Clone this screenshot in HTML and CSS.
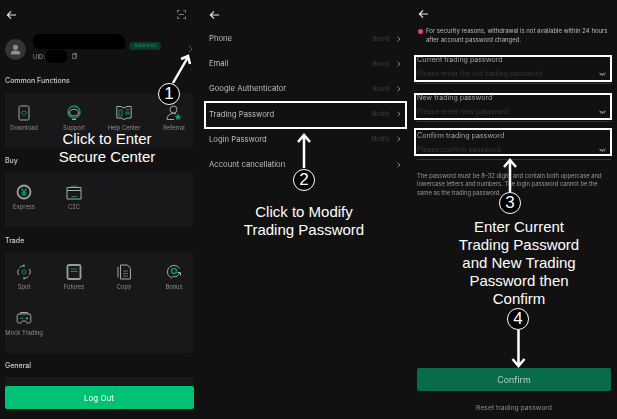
FILE: index.html
```html
<!DOCTYPE html>
<html lang="en">
<head>
    <meta charset="UTF-8">
    <meta name="viewport" content="width=device-width, initial-scale=1.0">
    <title>Change Trading Password</title>
    <link rel="stylesheet" href="styles.css">
</head>
<body>
    <div class="guide">
        <div class="screens">
            <!-- account screen -->
            <section class="screen account">
                <div class="topbar">
                    <svg class="back" viewBox="0 0 12 10"><path d="M11 5H1.5M5.5 1 1.5 5l4 4"/></svg>
                    <svg class="scan" viewBox="0 0 10 10"><path d="M0.5 3V0.5H3M7 0.5H9.5V3M0.5 7V9.5H3M7 9.5H9.5V7M2 5H8"/></svg>
                </div>
                <div class="profile">
                    <div class="avatar">
                        <svg viewBox="0 0 12 12"><circle cx="6" cy="3.6" r="2.8"/><path d="M1 11.5V9.6C1 8 3 7.2 6 7.2s5 .8 5 2.4v1.900z"/></svg>
                    </div>
                    <div class="who">
                        <div class="name-row">
                            <span class="redacted"></span>
                            <span class="badge">Advanced</span>
                        </div>
                        <div class="uid-row">
                            <span>UID:</span>
                            <span class="redacted-small"></span>
                            <svg class="copy-icon" viewBox="0 0 6 7"><path d="M1.5 1V.5h4v5H5M.5 1.5h4v5h-4z"/></svg>
                        </div>
                    </div>
                    <svg class="chev-thin" viewBox="0 0 6 10"><path d="M1 1l4 4-4 4"/></svg>
                </div>

                <h2 class="sec-title first">Common Functions</h2>
                <div class="card">
                    <div class="item">
                        <svg viewBox="0 0 16 16"><rect x="3" y="1" width="10" height="14" rx="1.5"/><path class="g" d="M8 10.5 5.8 8.2a1.4 1.4 0 0 1 2.2-1.7 1.4 1.4 0 0 1 2.200 1.7z"/></svg>
                        <span>Download</span>
                    </div>
                    <div class="item">
                        <svg viewBox="0 0 16 16"><circle class="g thick" cx="8" cy="7" r="6"/><path d="M3.5 8C3.500 3 12.500 3 12.500 8c0 4-9 4-9 0zM6 14.500h4"/></svg>
                        <span>Support</span>
                    </div>
                    <div class="item">
                        <svg viewBox="0 0 16 16"><path d="M8 3 5 1.5H.8V13H5l3 1.500L11 13h4.200V1.500H11z"/><path class="g" d="M3 5h3v6H3zM10 4.500h3M10 7h3v2h-3z"/></svg>
                        <span>Help Center</span>
                    </div>
                    <div class="item">
                        <svg viewBox="0 0 16 16"><circle cx="7.500" cy="4.500" r="3.500"/><path d="M1 14.500c0-4 3-6 6.500-6 1 0 2 .2 2.500.5M1 14.500h7"/><path class="gf" d="m12 8.500 1.100 2.200 2.400.3-1.800 1.600.5 2.400-2.200-1.200-2.200 1.200.5-2.400L8.500 11l2.400-.3z"/></svg>
                        <span>Referral</span>
                    </div>
                </div>

                <h2 class="sec-title">Buy</h2>
                <div class="card">
                    <div class="item">
                        <svg viewBox="0 0 16 16"><circle class="ring" cx="8" cy="8" r="6.500"/><path class="g yen" d="m5.500 4.500 2.500 3.500 2.500-3.500M8 8v4M5.500 8.500h5M5.500 10.500h5"/></svg>
                        <span>Express</span>
                    </div>
                    <div class="item">
                        <svg viewBox="0 0 16 16"><path d="M1 3.500h14V15H1z"/><path d="M1 6.500h14"/><path class="g" d="M4.500 3 6 1.500 8 3l2-1.500L11.500 3M5.500 12.500h5"/></svg>
                        <span>C2C</span>
                    </div>
                </div>

                <h2 class="sec-title">Trade</h2>
                <div class="card">
                    <div class="item">
                        <svg viewBox="0 0 16 16"><path d="M3.500 3.500A6.300 6.300 0 0 1 8 1.700M12.500 12.500A6.300 6.300 0 0 1 8 14.300M13.500 5a6.300 6.300 0 0 1 0 6M2.500 11a6.300 6.300 0 0 1 0-6M8 .5v2.500M8 13v2.500"/><circle class="g" cx="8" cy="8" r="2"/></svg>
                        <span>Spot</span>
                    </div>
                    <div class="item">
                        <svg viewBox="0 0 16 16"><rect class="ring" x="1.500" y="1" width="13" height="14" rx="1.500"/><path class="g" d="M4.500 5h7M4.500 7.500h7"/></svg>
                        <span>Futures</span>
                    </div>
                    <div class="item">
                        <svg viewBox="0 0 16 16"><path d="M4.500 15h10V4.500L11.500 1H4.500zM2 3v10.500"/><path class="g" d="M7 7h5M7 9.500h5M7 12h5"/></svg>
                        <span>Copy</span>
                    </div>
                    <div class="item">
                        <svg viewBox="0 0 16 16"><path d="M13.500 4.500A6.500 6.500 0 0 0 1.500 8c0 1.500.5 3 1.500 4l2.500 2 2.500-2 2 1"/><circle class="g thick" cx="8" cy="7" r="2.500"/><path d="m10 13 4-4M11.500 8.500H14.500V11.500"/></svg>
                        <span>Bonus</span>
                    </div>
                    <div class="item">
                        <svg viewBox="0 0 16 16"><path d="M3 4h10a1.800 1.800 0 0 1 1.800 1.800v5.700c0 1-.8 1.500-1.500 1.500h-2L9.500 11h-3L4.700 13h-2C2 13 1.200 12.500 1.200 11.500V5.800A1.800 1.800 0 0 1 3 4zM3.500 4 4.500 2.500h7L12.500 4"/><path class="g" d="M4 8.300h3.500"/><circle class="gf" cx="11" cy="8.300" r="1.300"/></svg>
                        <span>Mock Trading</span>
                    </div>
                </div>

                <h2 class="sec-title">General</h2>
                <div class="card-peek"></div>
                <button class="logout">Log Out</button>
            </section>

            <!-- secure center -->
            <section class="screen secure">
                <div class="topbar">
                    <svg class="back" viewBox="0 0 12 10"><path d="M11 5H1.500M5.500 1 1.500 5l4 4"/></svg>
                </div>
                <ul class="menu">
                    <li><span>Phone</span><em>Bound</em><svg viewBox="0 0 6 10"><path d="M1 1l4 4-4 4"/></svg></li>
                    <li><span>Email</span><em>Bound</em><svg viewBox="0 0 6 10"><path d="M1 1l4 4-4 4"/></svg></li>
                    <li><span>Google Authenticator</span><em>Bound</em><svg viewBox="0 0 6 10"><path d="M1 1l4 4-4 4"/></svg></li>
                    <li><span>Trading Password</span><em>Modify</em><svg viewBox="0 0 6 10"><path d="M1 1l4 4-4 4"/></svg></li>
                    <li><span>Login Password</span><em>Modify</em><svg viewBox="0 0 6 10"><path d="M1 1l4 4-4 4"/></svg></li>
                    <li><span>Account cancellation</span><em></em><svg viewBox="0 0 6 10"><path d="M1 1l4 4-4 4"/></svg></li>
                </ul>
            </section>

            <!-- change password form -->
            <section class="screen form">
                <div class="topbar">
                    <svg class="back" viewBox="0 0 12 10"><path d="M11 5H1.500M5.500 1 1.500 5l4 4"/></svg>
                </div>
                <div class="notice">
                    <i class="dot"></i>
                    <p>For security reasons, withdrawal is not available within 24 hours after account password changed.</p>
                </div>
                <div class="fields">
                    <div class="field">
                        <label>Current trading password</label>
                        <div class="input-row"><span>Please enter the old trading password</span><svg viewBox="0 0 8 4"><path d="M.5.8c2 2 5 2 7 0M2 2.500 1.500 3.500M4 3v1M6 2.500l.5 1"/></svg></div>
                    </div>
                    <div class="field">
                        <label>New trading password</label>
                        <div class="input-row"><span>Please enter new password</span><svg viewBox="0 0 8 4"><path d="M.5.8c2 2 5 2 7 0M2 2.500 1.500 3.500M4 3v1M6 2.500l.5 1"/></svg></div>
                    </div>
                    <div class="field">
                        <label>Confirm trading password</label>
                        <div class="input-row"><span>Please confirm password</span><svg viewBox="0 0 8 4"><path d="M.5.8c2 2 5 2 7 0M2 2.500 1.500 3.500M4 3v1M6 2.500l.5 1"/></svg></div>
                    </div>
                </div>
                <p class="rules">The password must be 8–32 digits and contain both uppercase and lowercase letters and numbers. The login password cannot be the same as the trading password.</p>
                <button class="confirm">Confirm</button>
                <a class="reset">Reset trading password</a>
            </section>
        </div>

        <!-- annotations on top of the screenshots -->
        <svg class="marks" viewBox="0 0 617 419">
            <rect class="box" x="205" y="102" width="201" height="26"/>
            <rect class="box" x="415" y="56" width="196" height="25"/>
            <rect class="box" x="415" y="94" width="196" height="25"/>
            <rect class="box" x="415" y="129" width="196" height="26"/>
            <path class="arrow" d="M173 83 188 57M181 59 188 56 190 64"/>
            <path class="arrow" d="M304 168V135M298 142 304 135 310 142"/>
            <path class="arrow" d="M510 192V160M504 167 510 160 516 167"/>
            <path class="arrow" d="M518.500 330V366M512.500 359 518.500 366 524.500 359"/>
        </svg>
        <span class="step step-1">1</span>
        <span class="step step-2">2</span>
        <span class="step step-3">3</span>
        <span class="step step-4">4</span>
        <div class="note note-1">Click to Enter<br>Secure Center</div>
        <div class="note note-2">Click to Modify<br>Trading Password</div>
        <div class="note note-3">Enter Current<br>Trading Password<br>and New Trading<br>Password then<br>Confirm</div>
    </div>
</body>
</html>
```

FILE: styles.css
```css
* {
    box-sizing: border-box;
}

body {
    margin: 0;
    background: #000;
    font-family: Inter, "Liberation Sans", sans-serif;
    color: #d8d8d8;
}

svg {
    fill: none;
    stroke: #a6a6a6;
    stroke-width: 1;
    display: block;
}

svg .g {
    stroke: #0f8f5c;
}

svg .gf {
    stroke: none;
    fill: #0f9c63;
}

svg .thick {
    stroke-width: 1.6;
}

svg .ring {
    stroke: #9c9c9c;
    stroke-width: 1.8;
}

svg .yen {
    stroke-width: 1.3;
}

.guide {
    position: relative;
    width: 617px;
    height: 419px;
    overflow: hidden;
}

.screens {
    display: flex;
    height: 419px;
    background: #111112;
}

.screen {
    height: 419px;
    flex: none;
}

.account {
    width: 205px;
    padding: 0 12px 0 5px;
    filter: blur(.35px);
}

.secure {
    width: 205px;
    padding: 0 9px 0 4px;
    filter: blur(.2px);
}

.form {
    width: 207px;
    padding: 0 6px 0 7px;
    filter: blur(.35px);
}

/* top bar */
.topbar {
    height: 29px;
    display: flex;
    align-items: center;
    justify-content: space-between;
}

.secure .topbar {
    height: 26px;
    padding-top: 3px;
}

.form .topbar {
    height: 27px;
}

.back {
    width: 11px;
    height: 10px;
    stroke: #e8e8e8;
    stroke-width: 1.3;
}

.account .back,
.form .back {
    margin-left: 1px;
}

.scan {
    width: 9px;
    height: 9px;
    margin-right: 7px;
    stroke-width: .8;
}

/* account */
.profile {
    display: flex;
    align-items: center;
    height: 26px;
    margin-top: 7px;
}

.avatar {
    width: 21px;
    height: 21px;
    border-radius: 50%;
    background: #343436;
    display: flex;
    align-items: center;
    justify-content: center;
    flex: none;
}

.avatar svg {
    width: 11px;
    height: 11px;
    stroke: none;
    fill: #8d8d8d;
}

.who {
    margin-left: 7px;
    flex: 1;
}

.name-row {
    display: flex;
    align-items: flex-start;
    height: 16px;
}

.redacted {
    width: 92px;
    height: 15px;
    margin-top: -3px;
    background: #000;
    border-radius: 5px 8px 3px 6px;
}

.badge {
    margin: 5px 0 0 4px;
    height: 8px;
    width: 32px;
    border-radius: 4px;
    background: #0b3a28;
    color: #119a63;
    font-size: 4.5px;
    line-height: 8px;
    text-align: center;
}

.uid-row {
    display: flex;
    align-items: center;
    height: 10px;
    margin-top: -2px;
    font-size: 6px;
    color: #9a9a9a;
}

.redacted-small {
    width: 21px;
    height: 13px;
    margin-left: 1px;
    background: #000;
    border-radius: 5px;
}

.copy-icon {
    width: 5px;
    height: 6px;
    margin-left: 5px;
    stroke-width: .7;
}

.chev-thin {
    width: 5px;
    height: 8px;
    margin-left: -3px;
    stroke: #6d6d6d;
    flex: none;
}

.sec-title {
    height: 9px;
    margin: 8.5px 0 7px;
    line-height: 9px;
    font-size: 7px;
    font-weight: 500;
    color: #cfcfcf;
}

.sec-title.first {
    margin: 13.5px 0 8px;
}

.card {
    display: grid;
    grid-template-columns: repeat(4, 38px);
    column-gap: 12px;
    row-gap: 21px;
    background: #18181a;
    border-radius: 2px;
    padding: 12px 0 18px;
    width: 188px;
}

.item {
    display: flex;
    flex-direction: column;
    align-items: center;
    height: 25px;
    font-size: 5.8px;
    color: #8e8e8e;
    white-space: nowrap;
}

.item svg {
    width: 16px;
    height: 16px;
    margin-bottom: 3px;
    flex: none;
}

.card-peek {
    width: 188px;
    height: 9px;
    background: #18181a;
}

.logout {
    display: block;
    width: 189px;
    height: 23px;
    margin-left: -.5px;
    padding: 0;
    border: none;
    border-radius: 2px;
    background: #00c277;
    color: #e8f5ee;
    font-family: inherit;
    font-size: 8px;
    font-weight: 500;
}

/* secure center */
.menu {
    margin: 0;
    padding: 0;
    list-style: none;
}

.menu li {
    display: flex;
    align-items: center;
    height: 25.2px;
    font-size: 7.7px;
    color: #bdbdbd;
}

.menu li span {
    flex: 1;
}

.menu em {
    font-style: normal;
    font-size: 5.5px;
    color: #3f3f42;
    margin-right: 7px;
}

.menu svg {
    width: 3.5px;
    height: 6px;
    margin-right: 1px;
    stroke: #bdbdbd;
    stroke-width: 1.2;
}

/* form */
.notice {
    display: flex;
    font-size: 6px;
    line-height: 8.5px;
    color: #bcbcbc;
    margin-left: 1px;
}

.dot {
    width: 5px;
    height: 5px;
    margin: 1.5px 3px 0 0;
    border-radius: 50%;
    background: #e8455a;
    flex: none;
}

.notice p {
    margin: 0 -3px 0 0;
}

.fields {
    margin-top: 2px;
}

.field {
    height: 38px;
    width: 194px;
}

.field label {
    display: block;
    padding-top: 8.5px;
    font-size: 7.1px;
    line-height: 9px;
    color: #a4a4a4;
}

.input-row {
    display: flex;
    align-items: center;
    justify-content: space-between;
    height: 20.5px;
    padding: 1px 5px 0 0;
    font-size: 7px;
    color: #38383c;
    border-bottom: 1px solid #333336;
}

.input-row svg {
    width: 7px;
    height: 4px;
    stroke: #e8e8e8;
    stroke-width: .8;
}

.rules {
    margin: 11.6px 0 0;
    width: 194px;
    font-size: 5.8px;
    line-height: 8.7px;
    color: #9a9a9a;
}

.confirm {
    display: block;
    width: 194px;
    height: 23px;
    margin-top: 170.5px;
    padding: 0;
    border: none;
    border-radius: 2px;
    background: #0a6b48;
    color: #b5d2c5;
    font-family: inherit;
    font-size: 8.8px;
}

.reset {
    display: block;
    width: 194px;
    margin-top: 12px;
    text-align: center;
    font-size: 6.8px;
    color: #8a8a8a;
}

/* annotations */
.marks {
    position: absolute;
    left: 0;
    top: 0;
    width: 617px;
    height: 419px;
}

.box {
    stroke: #fff;
    stroke-width: 2;
}

.arrow {
    stroke: #fff;
    stroke-width: 2.5;
}

.step {
    position: absolute;
    width: 22px;
    height: 22px;
    border: 1.5px solid #fff;
    border-radius: 50%;
    background: #000;
    color: #fff;
    font-family: "Liberation Sans", sans-serif;
    font-size: 17px;
    line-height: 19px;
    text-align: center;
}

.step-1 { left: 158px; top: 83px; }
.step-2 { left: 293px; top: 169px; }
.step-3 { left: 499px; top: 192px; }
.step-4 { left: 507px; top: 308px; }

.note {
    position: absolute;
    font-family: "Liberation Sans", sans-serif;
    font-size: 15px;
    line-height: 18px;
    color: #fff;
    text-align: center;
    white-space: nowrap;
    transform: translateX(-50%);
}

.note-1 { left: 107px; top: 130px; }
.note-2 { left: 304px; top: 203px; }
.note-3 { left: 519px; top: 218px; }
```
